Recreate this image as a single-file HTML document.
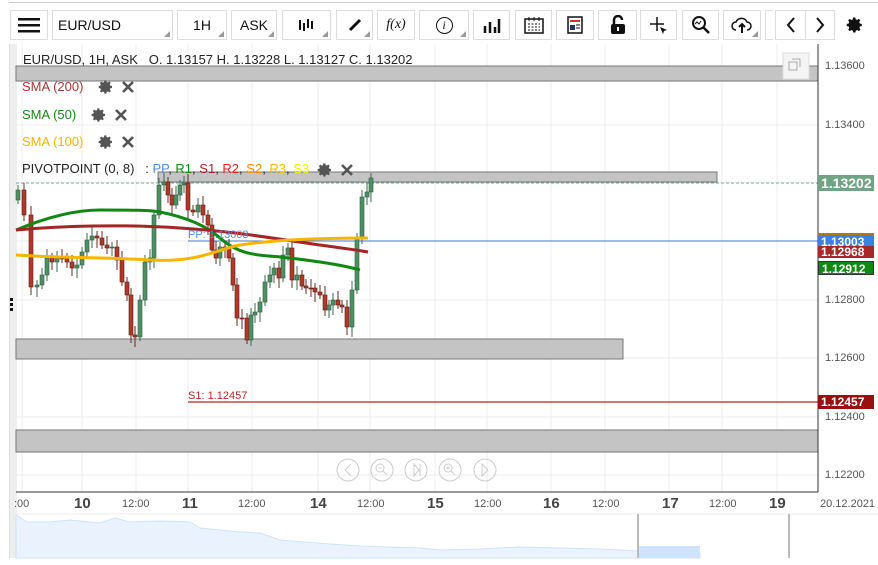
<!DOCTYPE html>
<html><head><meta charset="utf-8"><style>
body{margin:0;width:878px;height:565px;overflow:hidden;background:#fff;font-family:"Liberation Sans",sans-serif;position:relative}
.b{position:absolute;top:10px;height:30px;border:1px solid #ddd;background:#fff;box-sizing:border-box;display:flex;align-items:center;justify-content:center;font-size:14px;color:#111}
.b.d:after{content:"";position:absolute;right:2px;bottom:2px;border-left:6px solid transparent;border-bottom:6px solid #999}
.t{position:absolute;font-size:13px;white-space:nowrap}
.ax{position:absolute;left:825px;font-size:11px;color:#555}
.lb{position:absolute;left:818px;width:56px;height:14px;color:#fff;font-size:12px;font-weight:bold;line-height:14px;padding-left:3px;box-sizing:border-box}
.xl{position:absolute;top:498px;font-size:11px;color:#555}
.xb{position:absolute;top:495px;font-size:15px;color:#444;font-weight:bold}
.ic{position:absolute}
</style></head><body>
<svg width="0" height="0" style="position:absolute"><defs>
<symbol id="gx" viewBox="0 0 40 16"><path fill="#555" transform="translate(0,0) scale(0.6667)" d="M12 8a4 4 0 100 8 4 4 0 000-8zm9 5.5v-3l-2.6-.5a7 7 0 00-.8-1.9l1.5-2.2-2.1-2.1-2.2 1.5a7 7 0 00-1.9-.8L12.5 2h-3l-.5 2.6a7 7 0 00-1.9.8L4.9 3.9 2.8 6l1.5 2.2a7 7 0 00-.8 1.9L1 10.5v3l2.6.5c.2.7.4 1.3.8 1.9l-1.5 2.2 2.1 2.1 2.2-1.5c.6.4 1.2.6 1.9.8l.5 2.5h3l.5-2.6c.7-.2 1.3-.4 1.9-.8l2.2 1.5 2.1-2.1-1.5-2.2c.4-.6.6-1.2.8-1.9z"/><path d="M25 3l10 10M35 3L25 13" stroke="#555" stroke-width="2.6"/></symbol>
</defs></svg>
<div style="position:absolute;left:9px;top:2px;width:869px;height:1px;background:#ccc"></div>
<div class="b" style="left:10px;width:38px"><svg width="22" height="16"><rect y="1" width="22" height="2.5" fill="#111"/><rect y="7" width="22" height="2.5" fill="#111"/><rect y="13" width="22" height="2.5" fill="#111"/></svg></div>
<div class="b d" style="left:52px;width:121px;justify-content:flex-start;padding-left:5px">EUR/USD</div>
<div class="b d" style="left:177px;width:50px">1H</div>
<div class="b d" style="left:231px;width:46px">ASK</div>
<div class="b d" style="left:282px;width:49px"><svg width="18" height="14"><path d="M2 2v10M6 5v8M10 1v9M14 3v8" stroke="#111" stroke-width="2"/></svg></div>
<div class="b d" style="left:336px;width:37px"><svg width="16" height="16"><path d="M3 13L13 3" stroke="#111" stroke-width="3"/></svg></div>
<div class="b" style="left:377px;width:38px;font-family:'Liberation Serif';font-style:italic">f(x)</div>
<div class="b d" style="left:419px;width:50px;font-family:'Liberation Serif';font-style:italic"><span style="border:1.5px solid #111;border-radius:50%;width:15px;height:15px;line-height:15px;text-align:center;font-size:12px">i</span></div>
<div class="b" style="left:473px;width:37px"><svg width="18" height="16"><path d="M2 16V9M7 16V5M12 16V10M16 16V2" stroke="#111" stroke-width="2.5"/></svg></div>
<div class="b" style="left:515px;width:37px"><svg width="20" height="18"><rect x="1" y="3" width="18" height="14" fill="none" stroke="#111" stroke-width="1.5"/><path d="M5 1v4M10 1v4M15 1v4" stroke="#111"/><path d="M4 8h12M4 11h12M4 14h12" stroke="#111" stroke-dasharray="2 1.5"/></svg></div>
<div class="b" style="left:556px;width:38px"><svg width="16" height="18"><rect x="1" y="1" width="14" height="16" fill="none" stroke="#111" stroke-width="1.5"/><rect x="3" y="4" width="10" height="2" fill="#c33"/><rect x="3" y="9" width="5" height="5" fill="#236"/><path d="M9 9h4M9 12h4" stroke="#111"/></svg></div>
<div class="b" style="left:598px;width:39px"><svg width="16" height="20"><path d="M4 9V5a4 4 0 018 0" fill="none" stroke="#111" stroke-width="2.5"/><rect x="1" y="9" width="14" height="10" rx="2" fill="#111"/><rect x="7" y="12" width="2" height="4" fill="#fff"/></svg></div>
<div class="b" style="left:640px;width:37px"><svg width="20" height="18"><path d="M8 1v14M1 8h14" stroke="#111" stroke-width="1.5"/><path d="M11 11l7 3-3 1-1 3z" fill="#111"/></svg></div>
<div class="b" style="left:682px;width:37px"><svg width="20" height="20"><circle cx="8" cy="8" r="6" fill="none" stroke="#111" stroke-width="2"/><path d="M12 12l6 6" stroke="#111" stroke-width="2.5"/><path d="M4 9l2-2 2 2 2-3" fill="none" stroke="#111"/></svg></div>
<div class="b d" style="left:723px;width:38px"><svg width="22" height="18"><path d="M5 14a4 4 0 010-8 6 6 0 0111 0 4 4 0 010 8" fill="none" stroke="#111" stroke-width="1.5"/><path d="M11 17V8M8 11l3-3 3 3" fill="none" stroke="#111" stroke-width="2"/></svg></div>
<div class="b" style="left:765px;width:8px;border-right:none"></div>
<div class="b" style="left:775px;width:31px"><svg width="10" height="16"><path d="M8 1L2 8l6 7" fill="none" stroke="#111" stroke-width="2"/></svg></div>
<div class="b" style="left:805px;width:30px"><svg width="10" height="16"><path d="M2 1l6 7-6 7" fill="none" stroke="#111" stroke-width="2"/></svg></div>
<div style="position:absolute;left:846px;top:16px"><svg width="18" height="18" viewBox="0 0 24 24"><path fill="#111" d="M12 8a4 4 0 100 8 4 4 0 000-8zm9 5.5v-3l-2.6-.5a7 7 0 00-.8-1.9l1.5-2.2-2.1-2.1-2.2 1.5a7 7 0 00-1.9-.8L12.5 2h-3l-.5 2.6a7 7 0 00-1.9.8L4.9 3.9 2.8 6l1.5 2.2a7 7 0 00-.8 1.9L1 10.5v3l2.6.5c.2.7.4 1.3.8 1.9l-1.5 2.2 2.1 2.1 2.2-1.5c.6.4 1.2.6 1.9.8l.5 2.5h3l.5-2.6c.7-.2 1.3-.4 1.9-.8l2.2 1.5 2.1-2.1-1.5-2.2c.4-.6.6-1.2.8-1.9z"/></svg></div>

<div style="position:absolute;left:9px;top:44px;width:7px;height:514px;background:#eee;border-left:1px solid #ddd"></div>
<svg id="ch" style="position:absolute;left:0;top:0" width="878" height="565">
<g stroke="#ececec" stroke-width="1">
<path d="M16 66H818M16 125H818M16 183H818M16 241H818M16 300H818M16 358H818M16 417H818M16 475H818"/>
<path d="M22 44V492M82 44V492M136 44V492M188 44V492M252 44V492M318 44V492M370 44V492M435 44V492M487 44V492M551 44V492M605 44V492M669 44V492M722 44V492M777 44V492"/>
</g>
<g fill="#c4c4c4" stroke="#777" stroke-width="1">
<rect x="16" y="66" width="802" height="15"/>
<rect x="158" y="172" width="559" height="10"/>
<rect x="16" y="339" width="607" height="20"/>
<rect x="16" y="430" width="802" height="22"/>
</g>
<path d="M16 183H818" stroke="#6a9" stroke-dasharray="3 2"/>
<path d="M188 241H818" stroke="#4477cc"/>
<path d="M188 402H818" stroke="#b22" stroke-width="1.2"/>
<g id="cd"></g>
<path d="M16 230C40 220 70 210 100 210S150 210 160 212 200 220 220 238 260 255 280 257 340 264 360 270 370 267" fill="none" stroke="#118811" stroke-width="3"/>
<path d="M16 230C60 226 120 224 180 228S270 238 320 245 350 249 368 252" fill="none" stroke="#a32525" stroke-width="3"/>
<path d="M16 255C60 258 100 257 150 260S220 248 240 245 300 238 368 238" fill="none" stroke="#f7b500" stroke-width="3"/>
<path d="M818 44V492M16 492H818" stroke="#333"/>
<path d="M16 514H878" stroke="#eee"/>
<path d="M16 515L27 522 50 522 70 520 100 523 115 518 130 522 160 521 190 522 200 528 240 532 260 533 280 540 330 544 360 546 420 548 440 550 480 549 520 547 560 548 600 549 638 551 700 552V558H16Z" fill="#eaf3fd" stroke="#cfe3fa"/>
<rect x="638" y="546" width="62" height="12" fill="#cfe3fa"/>
<path d="M638 514V558M789 514V558" stroke="#bbb" stroke-width="2"/>
<g fill="none" stroke="#ccc"><circle cx="348" cy="470" r="11"/><circle cx="382" cy="470" r="11"/><circle cx="416" cy="470" r="11"/><circle cx="450" cy="470" r="11"/><circle cx="485" cy="470" r="11"/>
<path d="M351 464l-6 6 6 6M414 464v12l5-6zM420 464v12"/><circle cx="380" cy="468" r="4"/><circle cx="448" cy="468" r="4"/><path d="M383 471l4 4M451 471l4 4M378 468h4M446 468h4M448 466v4"/><path d="M482 464l6 6-6 6z"/></g>
<rect x="783" y="53" width="26" height="26" fill="#f4f4f4" stroke="#ddd"/>
<path d="M789 62h8v8h-8zM792 59h8v8" fill="none" stroke="#aaa"/>
<use href="#gx" x="98" y="79" width="40" height="16"/>
<use href="#gx" x="91" y="107" width="40" height="16"/>
<use href="#gx" x="98" y="134" width="40" height="16"/>
<use href="#gx" x="317" y="162" width="40" height="16"/>
</svg>
<div class="t" style="left:23px;top:52px;color:#222">EUR/USD, 1H, ASK &nbsp; O. 1.13157 H. 1.13228 L. 1.13127 C. 1.13202</div>
<div class="t" style="left:22px;top:79px;color:#a33">SMA (200)</div>
<div class="t" style="left:22px;top:107px;color:#181">SMA (50)</div>
<div class="t" style="left:22px;top:134px;color:#f5b400">SMA (100)</div>
<div class="t" style="left:22px;top:161px;color:#222">PIVOTPOINT (0, 8) &nbsp; : <span style="color:#4a8ef0">PP</span>, <span style="color:#181">R1</span>, <span style="color:#a22">S1</span>, <span style="color:#e22">R2</span>, <span style="color:#f80">S2</span>, <span style="color:#fb0">R3</span>, <span style="color:#ee0">S3</span></div>
<div class="t" style="left:188px;top:229px;color:#4a8ef0;font-size:11px">PP: 1.13003</div>
<div class="t" style="left:188px;top:390px;color:#b22;font-size:11px">S1: 1.12457</div>
<div class="ax" style="top:60px">1.13600</div>
<div class="ax" style="top:119px">1.13400</div>
<div class="ax" style="top:294px">1.12800</div>
<div class="ax" style="top:352px">1.12600</div>
<div class="ax" style="top:411px">1.12400</div>
<div class="ax" style="top:469px">1.12200</div>
<div class="lb" style="top:175px;height:16px;background:#6fa585;font-size:14px;line-height:16px">1.13202</div>
<div class="lb" style="top:233px;background:#3b82e0;border-top:2px solid #b07a10">1.13003</div>
<div class="lb" style="top:246px;background:#a82828;height:12px;line-height:12px">1.12968</div>
<div class="lb" style="top:261px;background:#118811;border:1px solid #333">1.12912</div>
<div class="lb" style="top:395px;background:#9a1010">1.12457</div>
<div class="xl" style="left:14px">:00</div>
<div class="xb" style="left:74px">10</div><div class="xl" style="left:122px">12:00</div>
<div class="xb" style="left:182px">11</div><div class="xl" style="left:238px">12:00</div>
<div class="xb" style="left:310px">14</div><div class="xl" style="left:357px">12:00</div>
<div class="xb" style="left:427px">15</div><div class="xl" style="left:474px">12:00</div>
<div class="xb" style="left:543px">16</div><div class="xl" style="left:592px">12:00</div>
<div class="xb" style="left:662px">17</div><div class="xl" style="left:709px">12:00</div>
<div class="xb" style="left:769px">19</div><div class="xl" style="left:820px">20.12.2021</div>
<div style="position:absolute;left:10px;top:298px;width:3px;height:14px;background:repeating-linear-gradient(#111 0 3px,transparent 3px 5px)"></div>
<script>
var c=[[18,190],[24,215],[31,287],[37,285],[42,275],[47,258],[52,262],[57,258],[62,258],[67,262],[72,268],[77,265],[82,252],[87,240],[92,236],[97,238],[102,245],[107,248],[112,247],[117,260],[122,282],[127,295],[131,335],[135,337],[140,300],[145,262],[150,258],[154,215],[159,185],[164,182],[168,195],[172,205],[176,195],[180,185],[184,183],[188,210],[193,212],[198,205],[203,215],[208,225],[212,250],[216,258],[220,247],[225,248],[229,258],[233,285],[237,318],[242,318],[247,340],[251,315],[255,312],[260,302],[265,282],[270,275],[274,268],[279,278],[283,255],[288,248],[292,280],[297,275],[302,286],[306,288],[311,288],[315,292],[320,295],[325,310],[329,305],[333,300],[338,305],[342,307],[347,327],[352,290],[357,238],[362,197],[367,192],[371,178]];
var s='',p=200;for(var i=0;i<c.length;i++){var x=c[i][0],y=c[i][1],up=y<p,t=Math.min(p,y),h=Math.max(1,Math.abs(p-y));
s+='<path d="M'+x+' '+(t-5-(i%3)*2)+'V'+(t+h+4+(i%4)*2)+'" stroke="'+(up?'#3a6a4a':'#6a2a20')+'"/>';
s+='<rect x="'+(x-2)+'" y="'+t+'" width="4" height="'+h+'" fill="'+(up?'#4f8f65':'#b03a2a')+'" stroke="'+(up?'#2f5f3f':'#5a1a10')+'" stroke-width="0.6"/>';p=y;}
document.getElementById('cd').innerHTML=s;
</script>
</body></html>
